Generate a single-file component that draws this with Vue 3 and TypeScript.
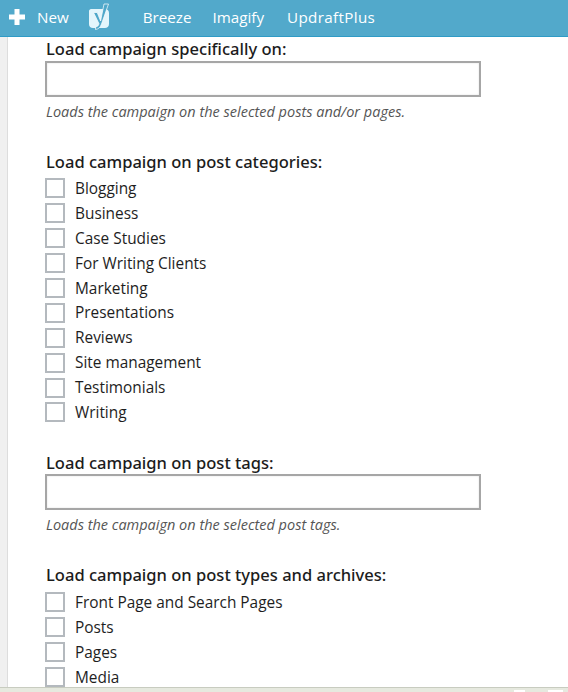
<template>
  <div class="page">
    <header class="topbar">
      <svg class="plus" viewBox="0 0 18 18" width="18" height="18">
        <path d="M6.500 1h5v5.500h5.500v5h-5.500V17h-5v-5.500H1v-5h5.500z" fill="#fff" />
      </svg>
      <span class="new">New</span>
      <svg class="yoast" viewBox="0 0 24 28" width="24" height="28">
        <path d="M4 6h14c2 0 4 1.500 4 4v11c0 2.500-2 4-4 4H6c-2.500 0-4-1.500-4-4V8c0-1 1-2 2-2z" fill="#e4f6fc" />
        <path d="M17 1h4.500l-7 20c-1.200 3.500-3 5-6 5.500v-2.500c2-.3 3-1.200 3.500-3.300L6.500 9.500h3.700l3.400 8.500z" fill="#4fa8ca" stroke="#fff" stroke-width=".7" />
      </svg>
      <a v-for="link in links" :key="link" class="link">{{ link }}</a>
    </header>
    <main class="content">
      <section class="group first">
        <h3>Load campaign specifically on:</h3>
        <input class="field" type="text" />
        <p class="hint">Loads the campaign on the selected posts and/or pages.</p>
      </section>
      <section class="group second">
        <h3 class="gap">Load campaign on post categories:</h3>
        <label v-for="cat in categories" :key="cat" class="check">
          <span class="box"></span>{{ cat }}
        </label>
      </section>
      <section class="group third">
        <h3 class="low">Load campaign on post tags:</h3>
        <input class="field" type="text" />
        <p class="hint">Loads the campaign on the selected post tags.</p>
      </section>
      <section class="group">
        <h3 class="low wide">Load campaign on post types and archives:</h3>
        <label v-for="t in types" :key="t" class="check">
          <span class="box"></span>{{ t }}
        </label>
      </section>
    </main>
    <div class="statusbar">
      <span class="tab small"></span>
      <span class="tab"></span>
    </div>
  </div>
</template>

<script setup lang="ts">
const links: string[] = ["Breeze", "Imagify", "UpdraftPlus"];
const categories: string[] = [
  "Blogging",
  "Business",
  "Case Studies",
  "For Writing Clients",
  "Marketing",
  "Presentations",
  "Reviews",
  "Site management",
  "Testimonials",
  "Writing",
];
const types: string[] = ["Front Page and Search Pages", "Posts", "Pages", "Media"];
</script>

<style scoped>
.page {
  position: relative;
  width: 568px;
  height: 692px;
  overflow: hidden;
  background: #fff;
  font-family: "Open Sans", "Noto Sans", sans-serif;
  color: #222;
  display: flex;
  flex-direction: column;
}
.topbar {
  flex: none;
  box-sizing: border-box;
  height: 37px;
  background: #52a9cb;
  border-bottom: 1px solid #2f9bc6;
  display: flex;
  align-items: center;
  color: #fff;
  font-size: 15.200px;
  padding: 0 0 2px 8px;
}
.new {
  margin-left: 11px;
}
.yoast {
  margin-left: 18px;
}
.link {
  margin-left: 21px;
}
.yoast + .link {
  margin-left: 32px;
}
.link:last-child {
  margin-left: 23px;
  letter-spacing: 0.350px;
}
.content {
  flex: 1;
  margin-left: 7px;
  border-left: 1px solid #ddd;
  box-shadow: -7px 0 0 #f0f0f0;
  padding-left: 37px;
}
.group {
  margin-bottom: 25px;
}
.group.first {
  margin-bottom: 29px;
}
.group.second {
  margin-bottom: 27px;
}
.group.third {
  margin-bottom: 30px;
}
h3 {
  margin: 0 0 0 1px;
  font-family: "Noto Sans", "Open Sans", sans-serif;
  font-size: 16.550px;
  font-weight: 500;
  line-height: 24px;
  color: #1c1c1c;
}
h3.gap {
  margin-bottom: 2px;
}
h3.low {
  line-height: 22px;
}
h3.wide {
  margin-bottom: 4px;
}
.field {
  display: block;
  box-sizing: border-box;
  width: 436px;
  height: 36px;
  border: 2px solid #a6a6a6;
  background: #fff;
  box-shadow: inset 0 0 2px #ddd;
  outline: none;
}
.hint {
  margin: 6px 0 0 1px;
  font-size: 14.500px;
  font-style: italic;
  line-height: 18px;
  color: #555;
}
.check {
  display: flex;
  align-items: center;
  height: 24.900px;
  font-size: 15.400px;
  color: #1e1e1e;
}
.box {
  box-sizing: border-box;
  width: 20px;
  height: 20px;
  border: 2px solid #b4b9be;
  background: #fff;
  margin-right: 10px;
}
.statusbar {
  position: absolute;
  left: 0;
  right: 0;
  bottom: 0;
  box-sizing: border-box;
  height: 5px;
  background: #e6e9df;
  border-top: 1px solid #c8ccc0;
  display: flex;
  justify-content: flex-end;
  align-items: flex-end;
  gap: 23px;
  padding-right: 5px;
}
.tab {
  width: 15px;
  height: 2px;
  background: #fff;
}
.tab.small {
  width: 11px;
}
</style>
